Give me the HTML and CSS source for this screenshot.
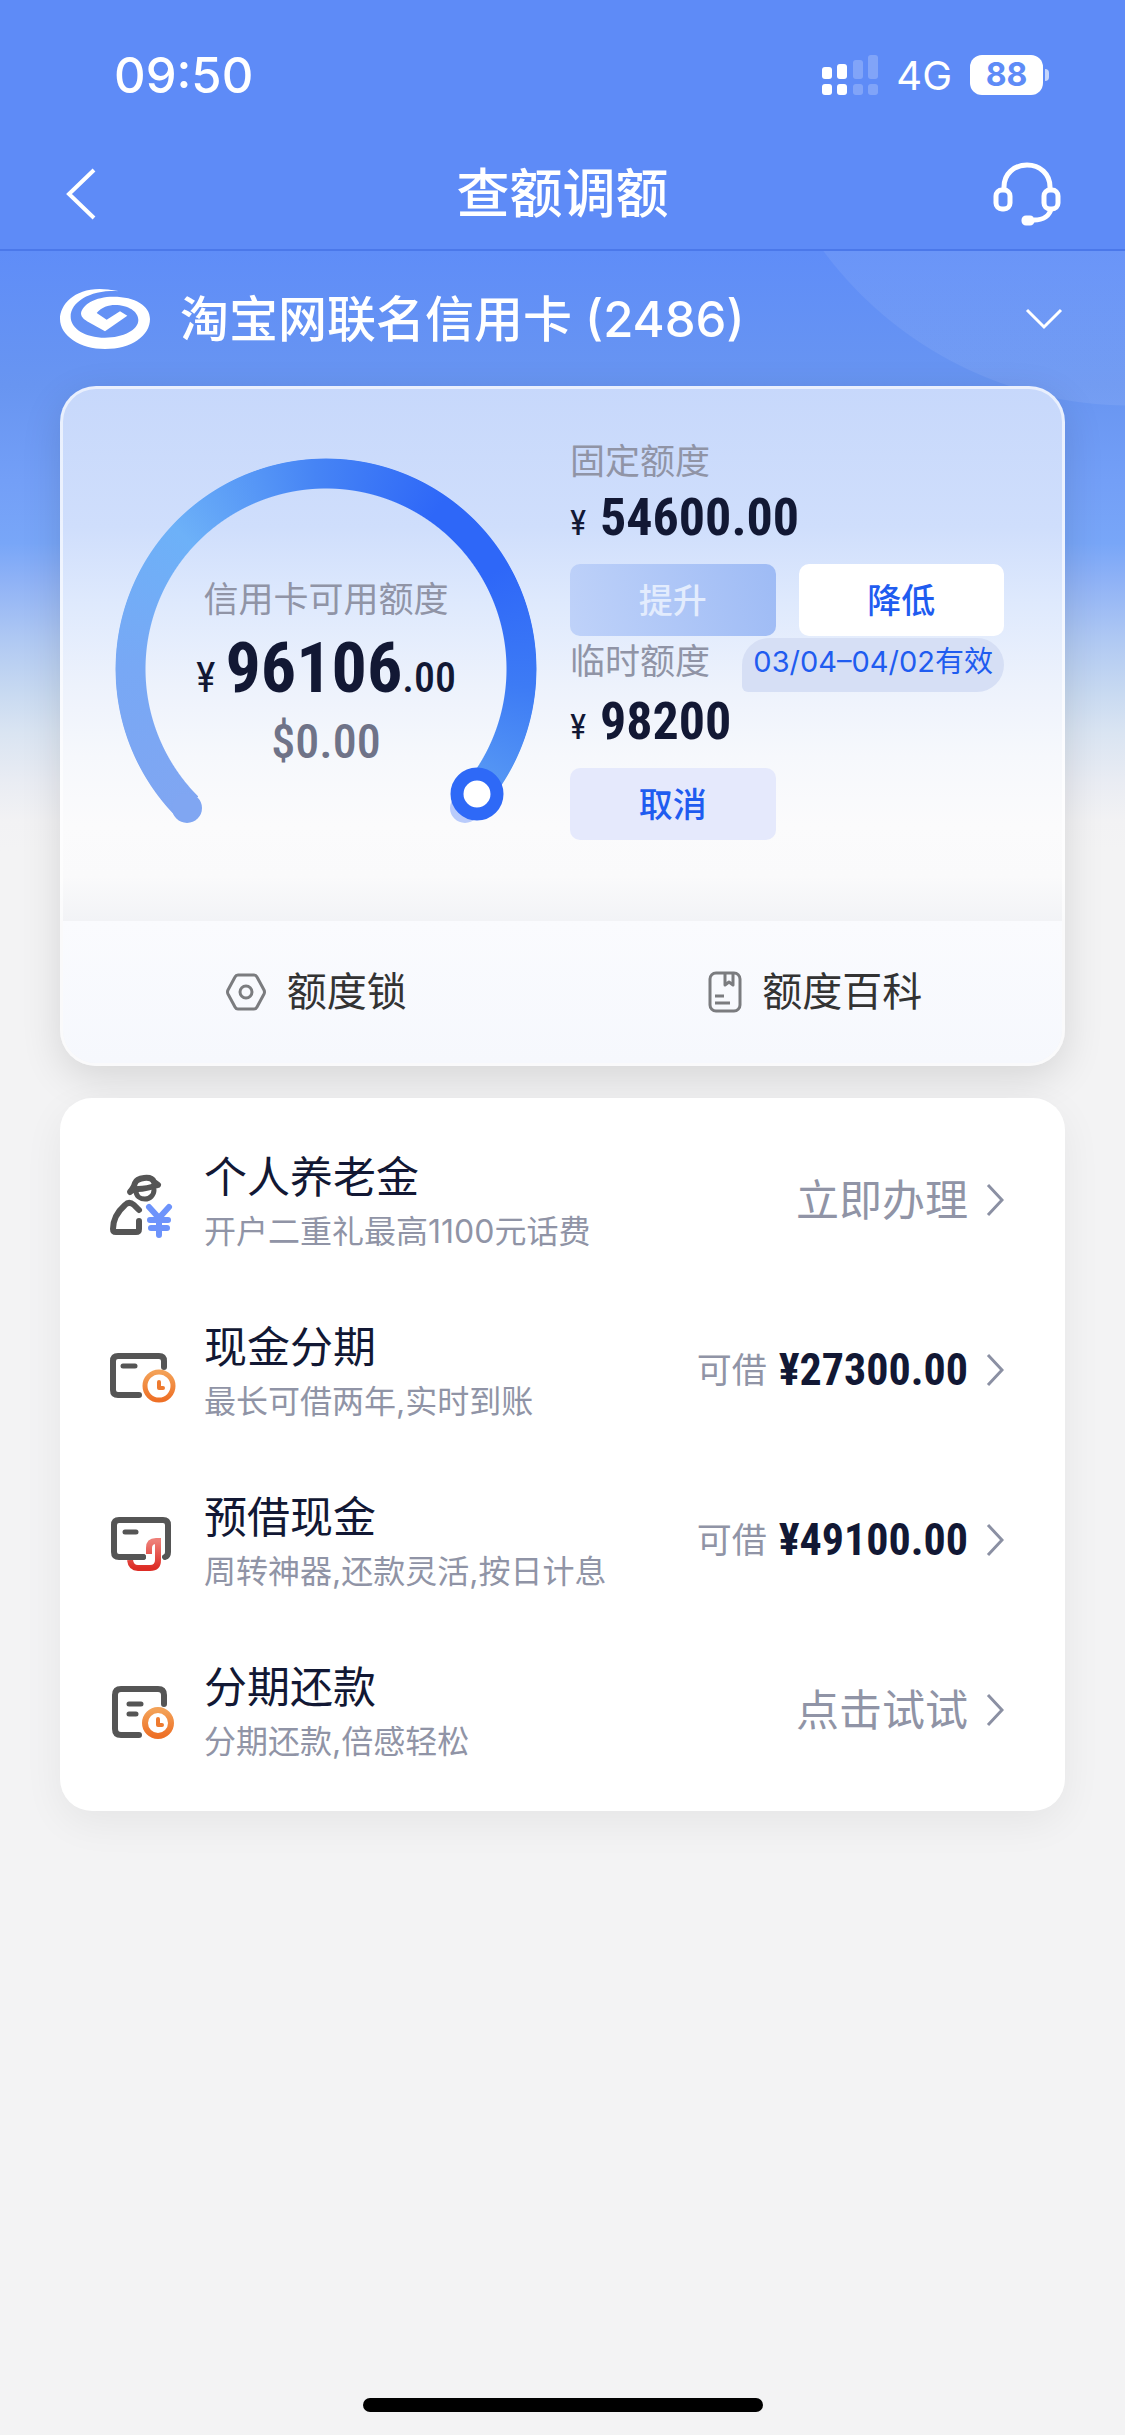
FILE: index.html
```html
<!DOCTYPE html>
<html lang="zh-CN">
<head>
<meta charset="utf-8">
<meta name="viewport" content="width=device-width, initial-scale=1">
<title>查额调额</title>
<link rel="stylesheet" href="styles.css">
</head>
<body>
<header class="top">
  <div class="status">
    <span class="clock">09:50</span>
    <div class="status-right">
      <svg class="signal" width="56" height="40" viewBox="0 0 56 40" fill="#fff" aria-hidden="true">
        <rect x="0" y="12" width="10" height="12" rx="3"/><rect x="15" y="9" width="10" height="15" rx="3"/>
        <rect x="0" y="29" width="10" height="11" rx="3"/><rect x="15" y="29" width="10" height="11" rx="3"/>
        <g opacity=".22"><rect x="31" y="5" width="10" height="19" rx="3"/><rect x="46" y="0" width="10" height="24" rx="3"/>
        <rect x="31" y="29" width="10" height="11" rx="3"/><rect x="46" y="29" width="10" height="11" rx="3"/></g>
      </svg>
      <span class="network">4G</span>
      <span class="battery">88</span>
    </div>
  </div>
  <nav class="nav">
    <button class="icon-button" type="button" aria-label="返回">
      <svg width="32" height="52" viewBox="0 0 32 52" fill="none" stroke="#fff" stroke-width="4"><path d="M30 2 5 26l25 24"/></svg>
    </button>
    <h1>查额调额</h1>
    <button class="icon-button" type="button" aria-label="客服">
      <svg width="68" height="64" viewBox="0 0 68 64" fill="none" stroke="#fff" stroke-width="5">
        <path d="M11 28V25C11 12 21 3 34 3s23 9 23 22v3"/>
        <rect x="3" y="28" width="14" height="19" rx="6"/><rect x="51" y="28" width="14" height="19" rx="6"/>
        <path d="M58 46c-1 8-8 12-17 12"/><rect x="30" y="55" width="10" height="7" rx="3" fill="#fff" stroke-width="3"/>
      </svg>
    </button>
  </nav>
</header>
<main class="page">
  <button class="card-select" type="button">
    <svg width="90" height="60" viewBox="60 55 270 180" fill="#fff" aria-hidden="true"><path d="M232 62C120 35 60 95 60 145c0 50 60 90 135 90 80 0 135-40 135-90 0-40-45-67-110-67-55 0-93 24-97 50 0 13 12 20 22 26l50 28 67-47-22-13-40 25-30-20c15-17 35-24 55-24 40 0 70 20 70 45 0 30-45 53-100 53-60 0-103-28-103-63 0-45 58-80 140-78Z"/></svg>
    <span class="card-name">淘宝网联名信用卡 (2486)</span>
    <svg width="38" height="22" viewBox="0 0 38 22" fill="none" stroke="#fff" stroke-width="3" aria-hidden="true"><path d="m2 2 17 17L36 2"/></svg>
  </button>

  <section class="limit-card">
    <div class="limit-body">
      <div class="gauge">
        <div class="gauge-ring"></div>
        <svg class="gauge-marks" viewBox="0 0 422 422" aria-hidden="true">
          <circle cx="350" cy="350" r="15" fill="#b9cbfb"/>
          <circle cx="72" cy="350" r="15" fill="#80a6f2"/>
          <circle cx="362" cy="336" r="20" fill="#fff" stroke="#2e69f7" stroke-width="13"/>
        </svg>
        <div class="gauge-text">
          <span class="label">信用卡可用额度</span>
          <span class="total"><span class="total-unit">¥</span><span class="total-main">96106</span><span class="total-cents">.00</span></span>
          <span class="dollar">$0.00</span>
        </div>
      </div>
      <div class="limits">
        <div class="limit-head"><span class="label">固定额度</span></div>
        <div class="amount"><span class="amount-unit">¥</span><span class="number">54600.00</span></div>
        <div class="actions">
          <button class="action action-raise" type="button" disabled>提升</button>
          <button class="action action-lower" type="button">降低</button>
        </div>
        <div class="limit-head"><span class="label">临时额度</span><span class="validity">03/04–04/02有效</span></div>
        <div class="amount"><span class="amount-unit">¥</span><span class="number">98200</span></div>
        <div class="actions">
          <button class="action action-cancel" type="button">取消</button>
        </div>
      </div>
    </div>
    <div class="links">
      <a href="#lock">
        <svg width="42" height="38" viewBox="0 0 42 38" fill="none" stroke="#7b7c7f" stroke-width="3" stroke-linejoin="round" aria-hidden="true"><path d="M13 2h16q2 0 3 2l7 13q1 2 0 4l-7 13q-1 2-3 2H13q-2 0-3-2L3 21q-1-2 0-4l7-13q1-2 3-2Z"/><circle cx="21" cy="19" r="6"/></svg>
        额度锁
      </a>
      <a href="#wiki">
        <svg width="34" height="42" viewBox="0 0 34 42" fill="none" stroke="#7b7c7f" stroke-width="3" stroke-linejoin="round" aria-hidden="true"><rect x="2" y="2" width="30" height="38" rx="6"/><path d="M17 3v11l4-3 4 3V3M7 25h9M7 32h15"/></svg>
        额度百科
      </a>
    </div>
  </section>

  <section class="services">
    <a class="service" href="#pension">
      <svg class="service-icon" viewBox="0 0 72 80" fill="none" stroke="#555" stroke-width="6" stroke-linecap="round" stroke-linejoin="round" aria-hidden="true">
        <path d="M22 32c2-3 4-4 5-9 2-5 16-8 19-1l4 3c-6 2-14 4-20 4s-6 2-8 3Z" stroke-width="6"/><path d="M28 31c0 5 4 8 9 8s9-4 9-9" stroke-width="5"/>
        <path d="M31 50l-5-5q-5-4-9 0C8 53 5 60 5 69q0 3 3 3h20q3 0 3-3v-8"/>
        <path d="m41 47 10 11 10-11M51 58v17M42 60h18M43 68h16" stroke="#6d93fb"/>
      </svg>
      <div class="service-text"><h2>个人养老金</h2><p>开户二重礼最高1100元话费</p></div>
      <span class="service-action">立即办理</span>
      <svg class="chevron" viewBox="0 0 18 34" aria-hidden="true"><path d="m2 2 14 15L2 32"/></svg>
    </a>
    <a class="service" href="#installment">
      <svg class="service-icon" viewBox="0 0 72 80" fill="none" stroke="#555" stroke-width="6" stroke-linecap="round" stroke-linejoin="round" aria-hidden="true">
        <defs><linearGradient id="orange" x1="0" y1="0" x2="0" y2="1"><stop offset="0" stop-color="#f3a157"/><stop offset="1" stop-color="#ee7026"/></linearGradient></defs>
        <path d="M56 37v-6q0-5-5-5H10q-5 0-5 5v29q0 5 5 5h21"/><path d="M15 36h12" stroke-width="5"/>
        <circle cx="51" cy="56" r="14" stroke="url(#orange)" stroke-width="5"/><path d="M51 52v6h4" stroke="#ee7a2f" stroke-width="4"/>
      </svg>
      <div class="service-text"><h2>现金分期</h2><p>最长可借两年,实时到账</p></div>
      <span class="service-value"><span class="label">可借</span><span class="value-number">¥27300.00</span></span>
      <svg class="chevron" viewBox="0 0 18 34" aria-hidden="true"><path d="m2 2 14 15L2 32"/></svg>
    </a>
    <a class="service" href="#advance">
      <svg class="service-icon" viewBox="0 0 72 80" fill="none" stroke="#555" stroke-width="6" stroke-linecap="round" stroke-linejoin="round" aria-hidden="true">
        <defs><linearGradient id="red" x1="0" y1="0" x2="0" y2="1"><stop offset="0" stop-color="#ee7f78"/><stop offset="1" stop-color="#dd2c25"/></linearGradient></defs>
        <path d="M35 57H11q-5 0-5-5V25q0-5 5-5h44q5 0 5 5v27q0 4-3 5"/><path d="M17 32h11" stroke-width="5"/>
        <path d="M41 54V48q0-7 7-7h2v19q0 8-8 8H30q-7 0-8-8" stroke="url(#red)" stroke-linecap="butt" stroke-linejoin="miter"/>
        <path d="M22 57h13"/>
      </svg>
      <div class="service-text"><h2>预借现金</h2><p>周转神器,还款灵活,按日计息</p></div>
      <span class="service-value"><span class="label">可借</span><span class="value-number">¥49100.00</span></span>
      <svg class="chevron" viewBox="0 0 18 34" aria-hidden="true"><path d="m2 2 14 15L2 32"/></svg>
    </a>
    <a class="service" href="#repay">
      <svg class="service-icon" viewBox="0 0 72 80" fill="none" stroke="#555" stroke-width="6" stroke-linecap="round" stroke-linejoin="round" aria-hidden="true">
        <path d="M56 34v-9q0-6-6-6H13q-6 0-6 6v34q0 6 6 6h18"/><path d="M21 34h12M21 44h7" stroke-width="5"/>
        <circle cx="50" cy="53" r="13" stroke="url(#orange)" stroke-width="6"/><path d="M50 49v6h4" stroke="#ee7a2f" stroke-width="4"/>
      </svg>
      <div class="service-text"><h2>分期还款</h2><p>分期还款,倍感轻松</p></div>
      <span class="service-action">点击试试</span>
      <svg class="chevron" viewBox="0 0 18 34" aria-hidden="true"><path d="m2 2 14 15L2 32"/></svg>
    </a>
  </section>
</main>
<div class="home-indicator"></div>
</body>
</html>
```
FILE: styles.css
```css
* { box-sizing: border-box; }

body {
  margin: 0;
  min-height: 100vh;
  display: flex;
  flex-direction: column;
  background: #f3f3f4;
  color: #121834;
  font-family: Inter, "Noto Sans CJK SC", sans-serif;
}

button {
  border: 0;
  padding: 0;
  background: none;
  color: inherit;
  font: inherit;
}

a { color: inherit; text-decoration: none; }

svg { display: block; flex: none; }

.top {
  background: #5e8bf7;
  border-bottom: 2px solid #4b78ea;
  color: #fff;
}

.status {
  display: flex;
  justify-content: space-between;
  align-items: center;
  height: 138px;
  padding: 12px 82px 0 114px;
}

.clock { font-size: 49px; font-weight: 500; }

.status-right { display: flex; align-items: center; }

.network { margin: 0 18px 0 18px; font-size: 40px; }

.battery {
  position: relative;
  width: 73px;
  height: 40px;
  border-radius: 12px;
  background: #fff;
  color: #5e8bf7;
  font-size: 32px;
  font-weight: 700;
  line-height: 40px;
  text-align: center;
}

.battery::after {
  content: "";
  position: absolute;
  left: 75px;
  top: 14px;
  width: 4px;
  height: 12px;
  border-radius: 0 4px 4px 0;
  background: #c5d5fc;
}

.nav {
  display: flex;
  justify-content: space-between;
  align-items: center;
  height: 111px;
  padding: 0 64px;
}

.nav h1 {
  margin: 0;
  font-size: 53px;
  font-weight: 500;
  line-height: 60px;
}

.icon-button { display: flex; width: 68px; }

.page {
  padding: 0 60px;
  background:
    radial-gradient(circle 382px at calc(100% + 5px) -227px, rgba(255, 255, 255, .07) 381px, transparent 382px) no-repeat,
    linear-gradient(#5f8df8, #6895f1 135px, #739ff7 230px, #78a6f8 292px, #8fb2f6 330px, #b0c9f3 390px, #c7d9f1 440px, #d9e4f2 480px, #e9ecf3 530px, #f2f2f4 570px, #f3f3f4 600px);
}

.card-select {
  display: flex;
  align-items: center;
  width: 100%;
  height: 135px;
  padding-right: 2px;
  color: #fff;
  text-align: left;
}

.card-name {
  flex: 1;
  margin-left: 30px;
  padding-top: 2px;
  font-size: 49px;
  font-weight: 500;
  line-height: 60px;
}

.limit-card {
  overflow: hidden;
  border: 3px solid rgba(255, 255, 255, .6);
  border-radius: 36px;
  background: linear-gradient(#c7d8fb, #cfdefc 140px, #dee9fd 215px, #edf2fc 300px, #f6f8fc 370px, #fbfbfc 440px, #fafafb 490px, #f2f3f6 535px) border-box;
  box-shadow: 0 12px 40px rgba(0, 0, 0, .12);
}

.limit-body {
  display: grid;
  grid-template-columns: 422px 1fr;
  gap: 33px;
  padding: 49px 58px 41px 52px;
}

.gauge {
  display: grid;
  height: 422px;
  margin-top: 20px;
}

.gauge > * { grid-area: 1 / 1; }

.gauge-ring {
  border-radius: 50%;
  background: conic-gradient(from 225deg, #80a6f2, #78a8f5 45deg, #6db1f8 88deg, #4684f5 132deg, #2e67f8 170deg, #2e67f8 195deg, #3d7bf5 230deg, #5a9cf4 265deg, transparent 265deg);
  -webkit-mask: radial-gradient(circle closest-side, transparent 180px, #000 181px, #000 210px, transparent 211px);
  mask: radial-gradient(circle closest-side, transparent 180px, #000 181px, #000 210px, transparent 211px);
}

.gauge-marks { z-index: 1; width: 100%; height: 100%; }

.gauge-text {
  display: flex;
  flex-direction: column;
  align-items: center;
  padding-top: 118px;
}

.label {
  color: #9094a6;
  font-size: 35px;
  line-height: 46px;
}

.total { display: flex; align-items: baseline; height: 92px; line-height: 92px; }

.total, .dollar, .amount, .value-number {
  font-family: "Roboto Condensed", "Noto Sans CJK SC", sans-serif;
}

.total-unit { margin-right: 10px; font-size: 42px; }
.total-main { font-size: 70px; font-weight: 700; }
.total-cents { font-size: 42px; font-weight: 500; }

.dollar {
  color: #6f7388;
  font-size: 48px;
  font-weight: 500;
  line-height: 56px;
}

.limit-head {
  display: flex;
  justify-content: space-between;
  align-items: flex-start;
  min-height: 50px;
}

.validity {
  padding: 6px 11px 12px;
  border-radius: 27px 27px 27px 6px;
  background: #d6dff5;
  color: #1f5cf0;
  font-size: 29px;
  line-height: 36px;
  white-space: nowrap;
}

.amount {
  display: flex;
  align-items: baseline;
  height: 60px;
  line-height: 60px;
  margin-bottom: 16px;
}

.amount-unit { width: 30px; font-size: 35px; }
.number { font-size: 52px; font-weight: 700; }

.actions {
  display: grid;
  grid-template-columns: 1fr 1fr;
  gap: 23px;
  margin-bottom: 2px;
}

.action {
  height: 72px;
  padding-bottom: 4px;
  border-radius: 10px;
  color: #1f5cf0;
  font-size: 34px;
  font-weight: 500;
}

.action-raise { background: linear-gradient(75deg, #bfd2f9, #9ebbf5); color: #e3ecfd; }
.action-lower { background: #fff; }
.action-cancel { background: #e5e9fc; }

.links {
  display: grid;
  grid-template-columns: 1fr 1fr;
  height: 142px;
  background: linear-gradient(#fafbfe, #f6f8fd);
  color: #333;
  font-size: 40px;
  line-height: 48px;
}

.links a {
  display: flex;
  justify-content: center;
  align-items: center;
  gap: 20px;
  padding-left: 6px;
}

.services {
  margin-top: 32px;
  padding: 17px 61px 16px 48px;
  border-radius: 32px;
  background: #fff;
  box-shadow: 0 12px 40px rgba(0, 0, 0, .06);
}

.service {
  display: flex;
  align-items: center;
  height: 170px;
}

.service-icon { width: 72px; height: 80px; }

.service-text { flex: 1; margin-left: 24px; }

.service-text h2 {
  margin: 0;
  font-size: 43px;
  font-weight: 400;
  line-height: 64px;
}

.service-text p {
  margin: 0;
  color: #9094a6;
  font-size: 32px;
  line-height: 46px;
}

.service-action {
  color: #9094a6;
  font-size: 43px;
  line-height: 60px;
}

.service-value { display: flex; align-items: center; gap: 12px; }

.value-number { font-size: 44px; font-weight: 700; line-height: 60px; }

.chevron {
  width: 18px;
  height: 34px;
  margin-left: 18px;
  fill: none;
  stroke: #8b90a3;
  stroke-width: 3;
}

.home-indicator {
  width: 400px;
  height: 14px;
  margin: auto auto 23px;
  border-radius: 7px;
  background: #000;
}
```
